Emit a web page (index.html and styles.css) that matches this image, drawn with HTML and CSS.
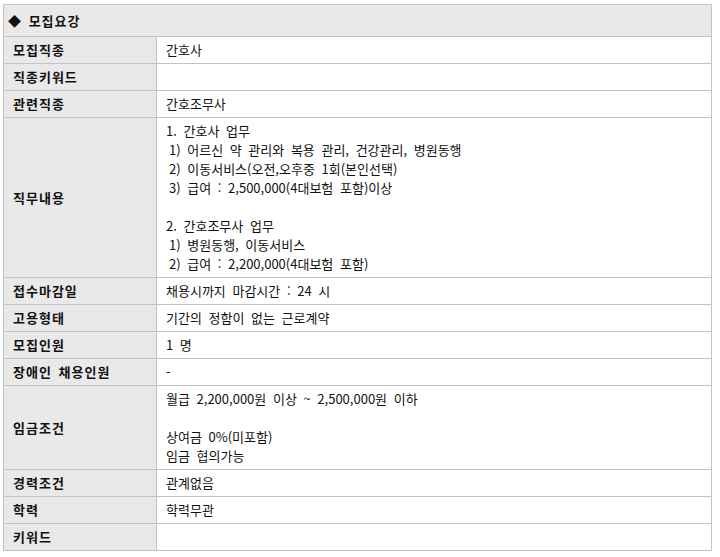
FILE: index.html
```html
<!DOCTYPE html>
<html lang="ko">
<head>
<meta charset="utf-8">
<link rel="stylesheet" href="styles.css">
</head>
<body>
<div class="wrap">
<table class="info">
  <tr><th colspan="2" class="head">◆ 모집요강</th></tr>
  <tr><th>모집직종</th><td>간호사</td></tr>
  <tr><th>직종키워드</th><td></td></tr>
  <tr><th>관련직종</th><td>간호조무사</td></tr>
  <tr><th>직무내용</th><td>1. 간호사 업무<br><span class="ind">1) 어르신 약 관리와 복용 관리, 건강관리, 병원동행</span><br><span class="ind">2) 이동서비스(오전,오후중 1회(본인선택)</span><br><span class="ind">3) 급여 : 2,500,000(4대보험 포함)이상</span><br><br>2. 간호조무사 업무<br><span class="ind">1) 병원동행, 이동서비스</span><br><span class="ind">2) 급여 : 2,200,000(4대보험 포함)</span></td></tr>
  <tr><th>접수마감일</th><td>채용시까지 마감시간 : 24 시</td></tr>
  <tr><th>고용형태</th><td>기간의 정함이 없는 근로계약</td></tr>
  <tr><th>모집인원</th><td>1 명</td></tr>
  <tr><th>장애인 채용인원</th><td>-</td></tr>
  <tr><th>임금조건</th><td>월급 2,200,000원 이상 ~ 2,500,000원 이하<br><br>상여금 0%(미포함)<br>임금 협의가능</td></tr>
  <tr><th>경력조건</th><td>관계없음</td></tr>
  <tr><th>학력</th><td>학력무관</td></tr>
  <tr><th>키워드</th><td></td></tr>
</table>
</div>
</body>
</html>
```
FILE: styles.css
```css
html, body {
  margin: 0;
  padding: 0;
  background: #fff;
}
.wrap {
  padding: 4px 0 0 3px;
}
.info {
  width: 709px;
  border-collapse: collapse;
  font-family: "Noto Sans CJK KR", "Noto Sans", sans-serif;
  font-size: 13px;
  line-height: 19px;
  color: #111;
}
.info th, .info td {
  border: 1px solid #c4c4c4;
  padding: 3px 9px 4px 9px;
  height: 19px;
  text-align: left;
  vertical-align: top;
}
.info td {
  word-spacing: 3px;
}
.ind {
  display: inline-block;
  padding-left: 3px;
}
.info th {
  width: 134px;
  background: #e9e9e9;
  font-weight: bold;
  vertical-align: middle;
  word-spacing: 2px;
  letter-spacing: 1px;
}
.info th.head {
  padding: 6px 4px 6px 4px;
  width: auto;
}
```
